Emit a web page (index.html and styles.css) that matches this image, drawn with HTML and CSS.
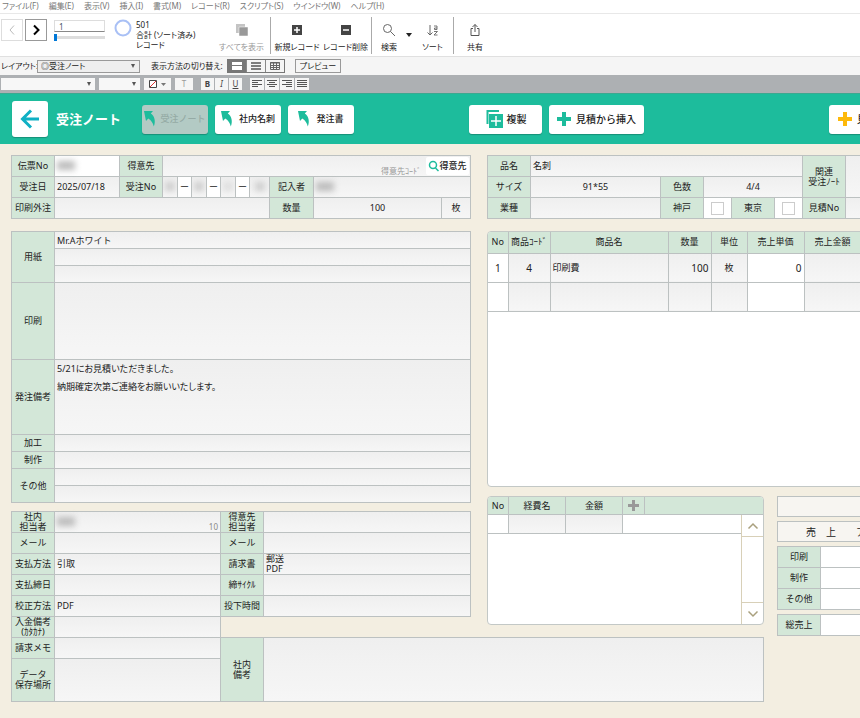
FILE: index.html
```html
<!DOCTYPE html>
<html lang="ja">
<head>
    <meta charset="UTF-8">
    <meta name="viewport" content="width=device-width, initial-scale=1.0">
    <title>受注ノート</title>
    <link rel="stylesheet" href="styles.css">
</head>
<body>
    <nav class="menu">
        <a href="#">ファイル(F)</a>
        <a href="#">編集(E)</a>
        <a href="#">表示(V)</a>
        <a href="#">挿入(I)</a>
        <a href="#">書式(M)</a>
        <a href="#">レコード(R)</a>
        <a href="#">スクリプト(S)</a>
        <a href="#">ウインドウ(W)</a>
        <a href="#">ヘルプ(H)</a>
    </nav>

    <div class="toolbar">
        <button class="step off" aria-label="前のレコード"><svg width="20" height="20" viewBox="0 0 20 20"><path d="M12 5.500L8 10l4 4.500"/></svg></button>
        <button class="step" aria-label="次のレコード"><svg width="20" height="20" viewBox="0 0 20 20"><path d="M8 5.500l4.500 4.500L8 14.500"/></svg></button>
        <div class="record">
            <input class="record-no" type="text" value="1" aria-label="レコード番号">
            <input class="record-slider" type="range" min="1" max="501" value="1" aria-label="レコード位置">
        </div>
        <svg class="ring" width="20" height="20" viewBox="0 0 20 20"><circle cx="10" cy="10" r="7.500"/></svg>
        <div class="found">501<br>合計 (ソート済み)<br>レコード</div>
        <button class="tool tool-all off">
            <svg width="16" height="16" viewBox="0 0 16 16"><path fill="#c4c4c4" d="M2 2h9v9H2z"/><path fill="#999" stroke="#fff" stroke-width=".5" d="M5 5h9v9H5z"/></svg>
            すべてを表示
        </button>
        <button class="tool tool-new">
            <svg width="16" height="16" viewBox="0 0 16 16"><path fill="#444" d="M3 3h10v10H3z"/><path stroke="#fff" stroke-width="1.500" d="M8 5v6M5 8h6"/></svg>
            新規レコード
        </button>
        <button class="tool tool-delete">
            <svg width="16" height="16" viewBox="0 0 16 16"><path fill="#444" d="M3 3h10v10H3z"/><path stroke="#fff" stroke-width="1.500" d="M5 8h6"/></svg>
            レコード削除
        </button>
        <button class="tool tool-find">
            <svg width="16" height="16" viewBox="0 0 16 16" fill="none" stroke="#666"><circle cx="6.500" cy="6.500" r="4"/><path d="M9.500 9.500L14 14"/></svg>
            検索
        </button>
        <button class="more" aria-label="検索メニュー"><svg width="6" height="4" viewBox="0 0 6 4"><path fill="#222" d="M0 0h6L3 4z"/></svg></button>
        <button class="tool tool-sort">
            <svg width="16" height="16" viewBox="0 0 16 16" fill="none" stroke="#666"><path d="M5 3v10M2.500 10.500L5 13l2.500-2.500"/><path d="M9 4h3v3.500H9.500V6H12M9 9.500h3.500L9 13h3.500" stroke-width=".9"/></svg>
            ソート
        </button>
        <button class="tool tool-share">
            <svg width="16" height="16" viewBox="0 0 16 16" fill="none" stroke="#555"><path d="M6 6.500H4v7h8v-7h-2M8 10V2.500M5.500 5L8 2.500 10.500 5"/></svg>
            共有
        </button>
    </div>

    <div class="layout-bar">
        <label for="layout">レイアウト:</label>
        <select id="layout" class="drop layout-select"><option>◎受注ノート</option></select>
        <span class="view-label">表示方法の切り替え:</span>
        <div class="views">
            <button class="on" aria-label="フォーム形式"><svg width="18" height="12" viewBox="0 0 18 12"><path fill="#fff" d="M4 2h10v3H4zM4 6h10v4H4z"/></svg></button>
            <button aria-label="リスト形式"><svg width="18" height="12" viewBox="0 0 18 12"><path stroke="#555" stroke-width="1.500" d="M4 3h10M4 6h10M4 9h10"/></svg></button>
            <button aria-label="表形式"><svg width="18" height="12" viewBox="0 0 18 12" fill="none" stroke="#666"><path d="M4.500 2.500h9v7h-9zM4 3h10M4 5.500h10M4 7.500h10M7.500 3v7M10.500 3v7"/></svg></button>
        </div>
        <button class="preview">プレビュー</button>
    </div>

    <div class="format-bar">
        <select class="drop font-name" aria-label="フォント"><option></option></select>
        <select class="drop font-size" aria-label="サイズ"><option></option></select>
        <button class="fill" aria-label="塗りつぶし"><svg width="22" height="10" viewBox="0 0 22 10"><path fill="#fff" stroke="#444" d="M2.500 1.500h7v7h-7z"/><path stroke="#d33" d="M3 8l6-6"/><path fill="#777" d="M14 4h5l-2.500 3z"/></svg></button>
        <button class="letter">T</button>
        <div class="group styles">
            <button><b>B</b></button>
            <button><i>I</i></button>
            <button><u>U</u></button>
        </div>
        <div class="group">
            <button aria-label="左揃え"><svg width="14" height="10" viewBox="0 0 14 10"><path d="M2 1.500h10M2 3.500h6M2 5.500h10M2 7.500h6"/></svg></button>
            <button aria-label="中央揃え"><svg width="14" height="10" viewBox="0 0 14 10"><path d="M2 1.500h10M4 3.500h6M2 5.500h10M4 7.500h6"/></svg></button>
            <button aria-label="右揃え"><svg width="14" height="10" viewBox="0 0 14 10"><path d="M2 1.500h10M6 3.500h6M2 5.500h10M6 7.500h6"/></svg></button>
            <button aria-label="両端揃え"><svg width="14" height="10" viewBox="0 0 14 10"><path d="M2 1.500h10M2 3.500h10M2 5.500h10M2 7.500h10"/></svg></button>
        </div>
    </div>

    <header class="header">
        <button class="back" aria-label="戻る"><svg width="24" height="24" viewBox="0 0 24 24" fill="none" stroke="#10b0c4" stroke-width="3"><path d="M21 12H5M13 3.500L4.500 12l8.500 8.500"/></svg></button>
        <h1>受注ノート</h1>
        <div class="jumps">
            <button class="jump" disabled><svg width="12" height="16" viewBox="0 0 12 16"><path d="M0 0h9L6.800 2.500C10.500 5 12 10 9.800 15.500 9 12 7.300 9.500 4.300 7.500L2 10z"/></svg>受注ノート</button>
            <button class="jump"><svg width="12" height="16" viewBox="0 0 12 16"><path d="M0 0h9L6.800 2.500C10.500 5 12 10 9.800 15.500 9 12 7.300 9.500 4.300 7.500L2 10z"/></svg>社内名刺</button>
            <button class="jump"><svg width="12" height="16" viewBox="0 0 12 16"><path d="M0 0h9L6.800 2.500C10.500 5 12 10 9.800 15.500 9 12 7.300 9.500 4.300 7.500L2 10z"/></svg>発注書</button>
        </div>
        <div class="actions">
            <button class="action copy"><svg width="18" height="18" viewBox="0 0 18 18"><path fill="none" stroke="#1dbc9c" stroke-width="2" d="M2.500 14V1H14"/><path fill="#1dbc9c" d="M4 4h14v14H4z"/><path stroke="#fff" stroke-width="1.500" d="M11 6v10M6 11h10"/></svg>複製</button>
            <button class="action insert"><svg width="14" height="14" viewBox="0 0 14 14"><path stroke="#1dbc9c" stroke-width="4" d="M7 0v14M0 7h14"/></svg>見積から挿入</button>
        </div>
        <button class="action create"><svg width="14" height="14" viewBox="0 0 14 14"><path stroke="#fdb90b" stroke-width="4" d="M7 0v14M0 7h14"/></svg>見積作成</button>
    </header>

    <main>
        <div class="columns">
            <div class="left">
                <section class="sheet slip">
                    <div class="row">
                        <span class="name">伝票No</span><div class="cell w64 white"><span class="mask"></span></div>
                        <label class="name" for="client">得意先</label>
                        <div class="cell client">
                            <input id="client" type="text">
                            <span class="hint">得意先ｺｰﾄﾞ</span>
                            <button class="search"><svg width="11" height="12" viewBox="0 0 11 12" fill="none" stroke="#1dbc9c" stroke-width="1.500"><circle cx="5" cy="5" r="3.500"/><path d="M7.500 8l3 3"/></svg>得意先</button>
                        </div>
                    </div>
                    <div class="row">
                        <label class="name" for="date">受注日</label><input id="date" class="w64" type="text" value="2025/07/18">
                        <span class="name">受注No</span>
                        <div class="number">
                            <div class="cell"><span class="mask small"></span></div><span class="dash">ー</span>
                            <div class="cell"><span class="mask small"></span></div><span class="dash">ー</span>
                            <div class="cell"><span class="mask small faint"></span></div><span class="dash">ー</span>
                            <div class="cell grow"><span class="mask small"></span></div>
                        </div>
                        <span class="name w43">記入者</span><div class="cell grow"><span class="mask"></span></div>
                    </div>
                    <div class="row">
                        <label class="name" for="outsource">印刷外注</label><input id="outsource" class="w214" type="text">
                        <label class="name w43" for="qty">数量</label><input id="qty" class="grow center" type="text" value="100">
                        <input class="w28 center" type="text" value="枚" aria-label="単位">
                    </div>
                </section>

                <section class="sheet details">
                    <div class="row">
                        <label class="name" for="paper">用紙</label>
                        <div class="lines">
                            <input id="paper" type="text" value="Mr.Aホワイト">
                            <input type="text" aria-label="用紙2">
                            <input type="text" aria-label="用紙3">
                        </div>
                    </div>
                    <div class="row"><label class="name" for="print">印刷</label><textarea id="print" class="grow tall"></textarea></div>
                    <div class="row"><label class="name" for="memo">発注備考</label><textarea id="memo" class="grow">5/21にお見積いただきました。
納期確定次第ご連絡をお願いいたします。</textarea></div>
                    <div class="row"><label class="name" for="process">加工</label><div class="lines"><input id="process" type="text"></div></div>
                    <div class="row"><label class="name" for="make">制作</label><div class="lines"><input id="make" type="text"></div></div>
                    <div class="row">
                        <label class="name" for="other">その他</label>
                        <div class="lines">
                            <input id="other" type="text">
                            <input type="text" aria-label="その他2">
                        </div>
                    </div>
                </section>

                <section class="sheet contact">
                    <div class="row">
                        <span class="name">社内<br>担当者</span><div class="cell w165"><span class="mask"></span><span class="code">10</span></div>
                        <label class="name" for="person">得意先<br>担当者</label><input id="person" class="grow" type="text">
                    </div>
                    <div class="row">
                        <label class="name" for="mail1">メール</label><input id="mail1" class="w165" type="text">
                        <label class="name" for="mail2">メール</label><input id="mail2" class="grow" type="text">
                    </div>
                    <div class="row">
                        <label class="name" for="pay">支払方法</label><input id="pay" class="w165" type="text" value="引取">
                        <label class="name" for="bill">請求書</label><textarea id="bill" class="grow tight">郵送
PDF</textarea>
                    </div>
                    <div class="row">
                        <label class="name" for="due">支払締日</label><input id="due" class="w165" type="text">
                        <label class="name" for="cycle">締ｻｲｸﾙ</label><input id="cycle" class="grow" type="text">
                    </div>
                    <div class="row">
                        <label class="name" for="proof">校正方法</label><input id="proof" class="w165" type="text" value="PDF">
                        <label class="name" for="time">投下時間</label><input id="time" class="grow" type="text">
                    </div>
                </section>
                <section class="sheet deposit">
                    <div class="row"><label class="name" for="deposit">入金備考<br>(ｶﾀｶﾅ)</label><input id="deposit" class="w165" type="text"></div>
                </section>
            </div>

            <div class="right">
                <section class="sheet product">
                    <div class="product-main">
                        <div class="row"><label class="name" for="item">品名</label><input id="item" class="grow" type="text" value="名刺"></div>
                        <div class="row">
                            <label class="name" for="size">サイズ</label><input id="size" class="w129 center" type="text" value="91*55">
                            <label class="name" for="colors">色数</label><input id="colors" class="grow center" type="text" value="4/4">
                        </div>
                        <div class="row">
                            <label class="name" for="kind">業種</label><input id="kind" class="w129" type="text">
                            <label class="name" for="kobe">神戸</label><div class="tick"><input id="kobe" type="checkbox"></div>
                            <label class="name" for="tokyo">東京</label><div class="tick"><input id="tokyo" type="checkbox"></div>
                        </div>
                    </div>
                    <div class="product-side">
                        <div class="row double"><label class="name" for="related">関連<br>受注ﾉｰﾄ</label><textarea id="related" class="grow"></textarea></div>
                        <div class="row"><label class="name" for="quote">見積No</label><input id="quote" class="grow" type="text"></div>
                    </div>
                </section>

                <section class="panel items">
                    <table>
                        <thead>
                            <tr><th class="c-no">No</th><th class="c-code">商品ｺｰﾄﾞ</th><th class="c-item">商品名</th><th class="c-qty">数量</th><th class="c-unit">単位</th><th class="c-price">売上単価</th><th class="c-price">売上金額</th><th></th></tr>
                        </thead>
                        <tbody>
                            <tr><td class="white">1</td><td>4</td><td class="start">印刷費</td><td class="end">100</td><td class="unit">枚</td><td class="white end">0</td><td></td><td></td></tr>
                            <tr><td class="white"></td><td></td><td></td><td></td><td></td><td class="white"></td><td></td><td></td></tr>
                        </tbody>
                    </table>
                </section>

                <div class="lower">
                    <section class="panel costs">
                        <div class="costs-head">
                            <span class="c-no">No</span><span class="c-cost">経費名</span><span class="c-cost">金額</span>
                            <button aria-label="経費を追加"><svg width="11" height="11" viewBox="0 0 11 11"><path stroke="#999" stroke-width="3" d="M5.500 0v11M0 5.500h11"/></svg></button>
                        </div>
                        <div class="costs-body">
                            <div class="costs-row">
                                <span class="c-no"></span>
                                <input class="c-cost" type="text" aria-label="経費名">
                                <input class="c-cost" type="text" aria-label="金額">
                            </div>
                            <div class="scroll">
                                <button aria-label="上へ"><svg width="12" height="8" viewBox="0 0 12 8"><path d="M1.500 6.500L6 2l4.500 4.500"/></svg></button>
                                <button aria-label="下へ"><svg width="12" height="8" viewBox="0 0 12 8"><path d="M1.500 1.500L6 6l4.500-4.500"/></svg></button>
                            </div>
                        </div>
                    </section>
                    <div class="totals">
                        <button class="total-button" aria-label="集計"></button>
                        <button class="total-button sales">売　上　　ア</button>
                        <div class="sheet">
                            <div class="row"><label class="name" for="t1">印刷</label><input id="t1" class="grow white" type="text"></div>
                            <div class="row"><label class="name" for="t2">制作</label><input id="t2" class="grow white" type="text"></div>
                            <div class="row"><label class="name" for="t3">その他</label><input id="t3" class="grow white" type="text"></div>
                        </div>
                        <div class="sheet">
                            <div class="row"><label class="name" for="t4">総売上</label><input id="t4" class="grow white" type="text"></div>
                        </div>
                    </div>
                </div>
            </div>
        </div>

        <section class="sheet notes">
            <div class="notes-left">
                <div class="row"><label class="name" for="billmemo">請求メモ</label><input id="billmemo" class="w165" type="text"></div>
                <div class="row storage"><label class="name" for="storage">データ<br>保存場所</label><textarea id="storage" class="w165"></textarea></div>
            </div>
            <div class="row grow"><label class="name" for="internal">社内<br>備考</label><textarea id="internal" class="grow"></textarea></div>
        </section>
    </main>
</body>
</html>
```

FILE: styles.css
```css
* {
    box-sizing: border-box;
}
body {
    margin: 0;
    min-height: 100vh;
    overflow-x: hidden;
    background: #f3eee1;
    color: #222;
    font-family: "Noto Sans", "Noto Sans CJK JP", sans-serif;
    font-size: 9px;
    line-height: 10px;
}
button, input, select, textarea {
    margin: 0;
    padding: 0;
    border: 0;
    border-radius: 0;
    background: none;
    color: inherit;
    font: inherit;
}
button {
    display: flex;
    align-items: center;
    justify-content: center;
    white-space: nowrap;
}
svg {
    flex: none;
}

/* menu and toolbars */
.menu, .toolbar, .layout-bar, .format-bar {
    display: flex;
    font-size: 8px;
    font-feature-settings: "palt";
    white-space: nowrap;
}
.menu {
    gap: 10px;
    height: 13px;
    padding-left: 2px;
    background: #fff;
    line-height: 12px;
}
.menu a {
    color: #777;
    text-decoration: none;
}
.toolbar {
    height: 43px;
    padding-left: 1px;
    background: #fff;
    border-top: 1px solid #e8e8e8;
}
.step {
    width: 22px;
    height: 22px;
    margin: 5px 2px 0 0;
    border: 1px solid #999;
}
.step.off {
    border-color: #ddd;
}
.step path {
    fill: none;
    stroke: #000;
    stroke-width: 2;
}
.step.off path {
    stroke: #bbb;
    stroke-width: 1;
}
.record {
    display: flex;
    flex-direction: column;
    width: 51px;
    margin: 6px 8px 0 5px;
}
.record-no {
    height: 12px;
    padding-left: 4px;
    border: 1px solid #ddd;
    border-bottom-color: #888;
    color: #456;
}
.record-slider {
    appearance: none;
    width: 51px;
    height: 9px;
    margin-top: 1px;
    background: linear-gradient(#ddd, #ddd) center / 100% 3px no-repeat;
}
.record-slider::-webkit-slider-thumb {
    appearance: none;
    width: 3px;
    height: 7px;
    background: #0078d7;
}
.ring {
    margin: 4px 3px 0 0;
    fill: none;
    stroke: #a9c0f5;
    stroke-width: 2;
}
.found {
    width: 82px;
    padding-top: 6px;
}
.tool {
    flex-direction: column;
    justify-content: flex-start;
    gap: 4px;
    padding-top: 8px;
}
.tool.off {
    color: #999;
}
.tool-all, .tool-delete, .tool-sort {
    background: linear-gradient(#aaa, #aaa) right 3px / 1px 37px no-repeat;
}
.tool-all {
    width: 53px;
    padding-right: 6px;
}
.tool-new {
    width: 52px;
}
.tool-delete {
    width: 49px;
    padding-right: 4px;
}
.tool-find {
    width: 34px;
}
.more {
    width: 5px;
}
.tool-sort {
    width: 43px;
}
.tool-share {
    width: 42px;
}
.layout-bar {
    align-items: center;
    height: 19px;
    padding-left: 1px;
    background: #f5f5f5;
    border-top: 1px solid #e0e0e0;
}
.layout-bar label {
    width: 36px;
}
.drop {
    appearance: none;
    height: 12px;
    padding-left: 3px;
    background: url("data:image/svg+xml,%3Csvg xmlns='http://www.w3.org/2000/svg' width='6' height='4'%3E%3Cpath fill='%23555' d='M1 0h4L3 4z'/%3E%3C/svg%3E") right 3px center no-repeat #f7f7f7;
}
.layout-select {
    width: 103px;
    height: 13px;
    border: 1px solid #999;
    background-color: #eee;
}
.view-label {
    width: 76px;
    margin-left: 11px;
}
.views {
    display: flex;
    border: 1px solid #777;
}
.views button {
    height: 12px;
}
.views button + button {
    border-left: 1px solid #888;
}
.views .on {
    background: #777;
}
.preview {
    width: 46px;
    height: 14px;
    margin-left: 10px;
    border: 1px solid #999;
}
.format-bar {
    align-items: center;
    height: 18px;
    padding-left: 1px;
    background: #adb0b3;
}
.format-bar button {
    height: 12px;
    background: #f5f5f5;
    color: #444;
}
.font-name {
    width: 94px;
}
.font-size {
    width: 41px;
    margin-left: 4px;
}
.fill {
    width: 27px;
    margin-left: 4px;
}
.letter {
    width: 18px;
    margin-left: 4px;
}
.format-bar .letter {
    color: #999;
}
.group {
    display: flex;
    gap: 1px;
    margin-left: 8px;
}
.group button {
    width: 14px;
}
.styles button {
    width: 13px;
}
.group path {
    stroke: #555;
}

/* green header */
.header {
    display: flex;
    align-items: center;
    height: 51px;
    padding-left: 12px;
    overflow: hidden;
    background: #1dbc9c;
    border-top: 1px solid #3ca890;
}
.header > * {
    flex: none;
}
.back, .jump, .action {
    background: #fff;
    border-radius: 3px;
    box-shadow: 0 1px 1px #178f78;
}
.back {
    width: 36px;
    height: 36px;
}
.header h1 {
    width: 94px;
    margin: 0;
    padding-left: 8px;
    color: #fff;
    font-size: 13px;
    line-height: 16px;
}
.jumps, .actions {
    display: flex;
    gap: 7px;
}
.jump {
    width: 66px;
    height: 29px;
    gap: 6px;
    font-weight: 500;
}
.jump path {
    fill: #1dbc9c;
}
.jump:disabled {
    gap: 4px;
    background: #b3cac4;
    color: #95aaa5;
}
.actions {
    margin-left: 115px;
}
.action {
    height: 29px;
    font-size: 10px;
    font-weight: 500;
}
.copy {
    width: 73px;
    gap: 4px;
}
.insert {
    width: 95px;
    gap: 5px;
}
.create {
    justify-content: flex-start;
    width: 95px;
    margin-left: 185px;
    padding-left: 9px;
    gap: 5px;
}

/* ruled sheets, the 1px gaps are the lines */
main {
    padding: 11px 11px 17px;
    overflow: hidden;
}
.columns {
    display: grid;
    grid-template-columns: 460px 620px;
    column-gap: 16px;
    align-items: start;
}
.sheet {
    display: flex;
    flex-direction: column;
    gap: 1px;
    padding: 1px;
    background: #bcc1c1;
}
.row {
    display: flex;
    gap: 1px;
    min-height: 20px;
}
.name {
    display: flex;
    flex: none;
    align-items: center;
    justify-content: center;
    width: 42px;
    background: #d3e7d8;
    text-align: center;
    white-space: nowrap;
}
.sheet input, .sheet textarea, .cell {
    min-width: 0;
    padding: 0 2px;
    background: linear-gradient(#efefef, #f6f6f6);
}
.sheet textarea {
    display: block;
    resize: none;
    overflow: hidden;
    font-feature-settings: "palt";
    line-height: 18px;
}
.sheet .tight {
    height: 20px;
    line-height: 10px;
}
.grow {
    flex: 1;
}
.center {
    text-align: center;
}
.w28 {
    width: 28px;
}
.w43 {
    width: 43px;
}
.w64 {
    width: 64px;
}
.w129 {
    width: 129px;
}
.w165 {
    width: 165px;
}
.w214 {
    width: 214px;
}
.sheet .white, td.white {
    background: #fff;
}
.cell {
    display: flex;
}
.mask {
    width: 18px;
    height: 9px;
    margin-top: 5px;
    background: #bbb;
    filter: blur(3px);
}
.mask.small {
    width: 10px;
    background: #ccc;
}
.mask.faint {
    background: #ddd;
}
.client {
    flex: 1;
    padding-right: 1px;
}
.client input {
    flex: 1;
    background: none;
}
.hint {
    align-self: flex-end;
    margin-right: 5px;
    color: #999;
    font-size: 8px;
}
.search {
    width: 43px;
    margin: 1px 0;
    background: #fff;
    border-radius: 2px;
    font-weight: 500;
}
.number {
    display: flex;
    gap: 1px;
    width: 106px;
}
.number .cell {
    width: 14px;
    overflow: hidden;
}
.number .grow {
    justify-content: center;
}
.dash {
    width: 13px;
    background: #fff;
    line-height: 19px;
    text-align: center;
}
.details {
    margin-top: 12px;
}
.details .row {
    min-height: 16px;
}
.lines {
    display: flex;
    flex: 1;
    flex-direction: column;
    gap: 1px;
}
.lines input {
    height: 16px;
}
.details textarea {
    height: 74px;
}
.details .tall {
    height: 76px;
}
.contact {
    margin-top: 8px;
}
.code {
    align-self: flex-end;
    margin-left: auto;
    color: #888;
    font-size: 8px;
}
.deposit {
    width: 210px;
    padding: 0 1px;
}
.notes {
    flex-direction: row;
    width: 753px;
}
.notes-left {
    display: flex;
    flex-direction: column;
    gap: 1px;
}
.storage {
    height: 42px;
}
.storage textarea {
    height: 42px;
}

/* right side */
.product {
    flex-direction: row;
}
.product-main, .product-side {
    display: flex;
    flex-direction: column;
    gap: 1px;
}
.product-main {
    width: 314px;
}
.product-side {
    flex: 1;
}
.double {
    height: 41px;
}
.tick {
    display: flex;
    flex: 1;
    align-items: center;
    justify-content: center;
    background: #fff;
}
.sheet .tick input {
    appearance: none;
    width: 13px;
    height: 13px;
    padding: 0;
    background: #fff;
    border: 1px solid #ccc;
}
.panel {
    overflow: hidden;
    background: #fff;
    border: 1px solid #c3c8c6;
    border-radius: 4px;
}
.items {
    min-height: 256px;
    margin-top: 12px;
}
table {
    width: 100%;
    border-collapse: collapse;
    table-layout: fixed;
}
th, td {
    height: 29px;
    padding: 0 2px;
    border-right: 1px solid #bcc1c1;
    border-bottom: 1px solid #bcc1c1;
    background: linear-gradient(#efefef, #f6f6f6);
    font-size: 10px;
    text-align: center;
    white-space: nowrap;
}
th {
    height: 21px;
    padding: 0;
    background: #d3e7d8;
    font-size: 9px;
    font-weight: 400;
}
.start, .unit {
    font-size: 9px;
}
.start {
    text-align: left;
}
.end {
    text-align: right;
}
.c-no {
    width: 21px;
}
th.c-no {
    width: 20px;
}
.c-code {
    width: 42px;
}
.c-item {
    width: 118px;
}
.c-qty {
    width: 43px;
}
.c-unit {
    width: 36px;
}
.c-price {
    width: 57px;
}
.c-cost {
    width: 57px;
}
.lower {
    display: flex;
    gap: 13px;
    margin-top: 9px;
}
.costs {
    display: flex;
    flex-direction: column;
    width: 277px;
    height: 129px;
}
.costs-head {
    display: flex;
    height: 18px;
    background: #d3e7d8;
    border-bottom: 1px solid #bcc1c1;
    line-height: 17px;
    text-align: center;
}
.costs-head > * {
    border-right: 1px solid #bcc1c1;
}
.costs-head button {
    width: 22px;
}
.costs-body {
    display: flex;
    flex: 1;
}
.costs-row {
    display: flex;
    flex: 1;
    height: 19px;
    border-bottom: 1px solid #bcc1c1;
}
.costs-row > * {
    border-right: 1px solid #bcc1c1;
}
.costs-row input {
    background: linear-gradient(#efefef, #f6f6f6);
}
.scroll {
    display: flex;
    flex-direction: column;
    justify-content: space-between;
    width: 22px;
    border-left: 1px solid #d8d0b8;
}
.scroll button {
    height: 22px;
    border-bottom: 1px solid #d8d0b8;
}
.scroll button + button {
    border-top: 1px solid #d8d0b8;
    border-bottom: 0;
}
.scroll path {
    fill: none;
    stroke: #a9a07e;
    stroke-width: 1.5;
}
.totals {
    display: flex;
    flex: 1;
    flex-direction: column;
    gap: 4px;
}
.total-button {
    justify-content: flex-start;
    height: 21px;
    padding-left: 28px;
    background: #f7f5f1;
    border: 1px solid #bcc1c1;
    font-size: 10px;
}
```
